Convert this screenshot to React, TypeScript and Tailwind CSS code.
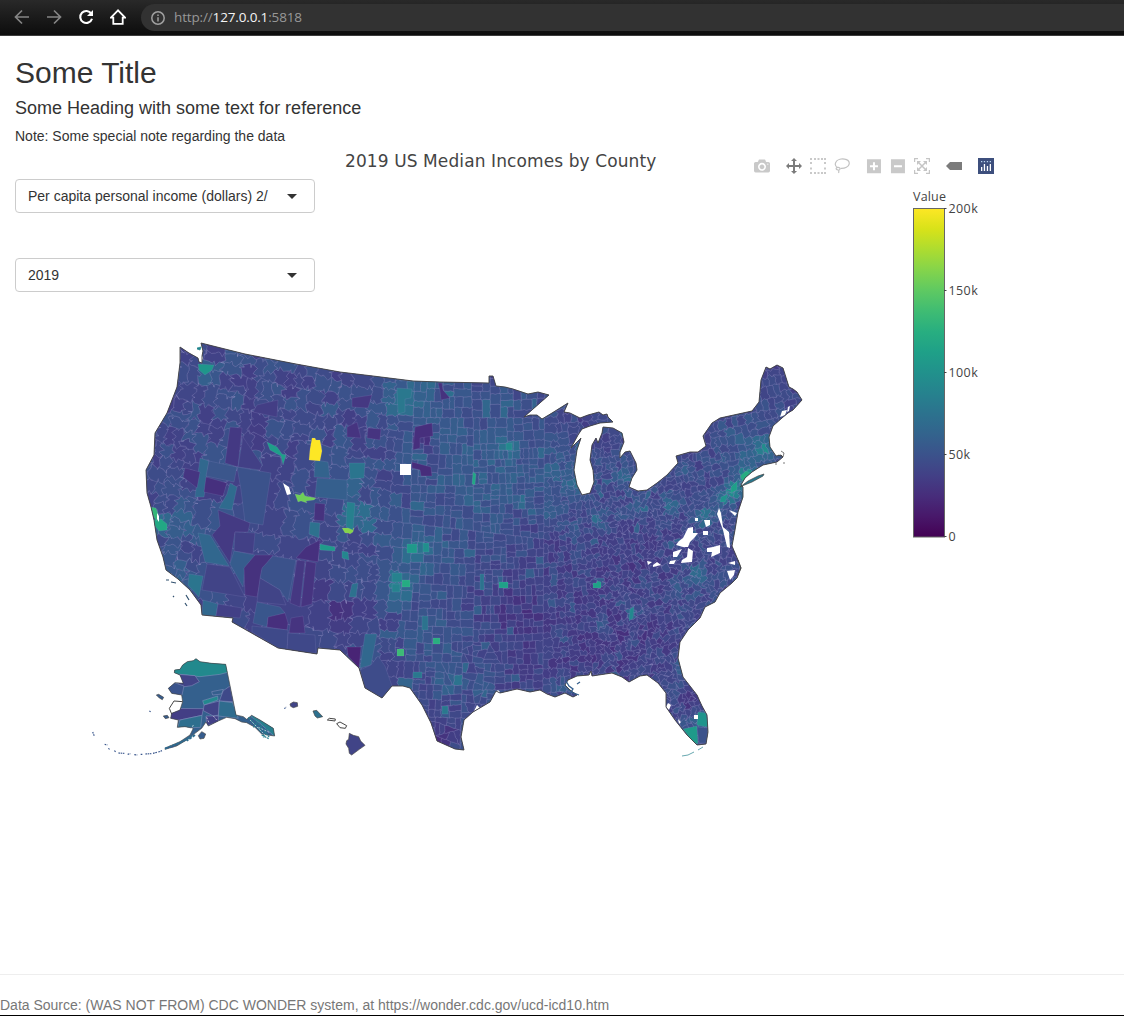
import React from "react";

type Pt = [number, number];

const VIRIDIS = [
  "#440154", "#48186a", "#472d7b", "#424086", "#3b528b", "#33638d", "#2c728e", "#26828e",
  "#21918c", "#1fa088", "#28ae80", "#3fbc73", "#5ec962", "#84d44b", "#addc30", "#d8e219", "#fde725",
];

function ramp(v: number): string {
  const t = Math.max(0, Math.min(0.9999, v)) * 16;
  const i = Math.floor(t);
  const f = t - i;
  const at = (s: string, k: number) => parseInt(s.slice(k, k + 2), 16);
  const mix = [1, 3, 5].map((k) =>
    Math.round(at(VIRIDIS[i], k) * (1 - f) + at(VIRIDIS[i + 1], k) * f)
  );
  return `rgb(${mix.join(",")})`;
}

function makeRandom(seed: number) {
  let s = seed;
  return () => {
    s = (s + 0x6d2b79f5) | 0;
    let t = Math.imul(s ^ (s >>> 15), 1 | s);
    t = (t + Math.imul(t ^ (t >>> 7), 61 | t)) ^ t;
    return ((t ^ (t >>> 14)) >>> 0) / 4294967296;
  };
}

/* Typical county pitch in pixels at a point of the map. */
function pitch(x: number, y: number): number {
  if (x < 200 && y > 455) return 12;
  if (x < 325 && y > 555) return 29;
  if (x < 310 && y > 455) return 23;
  if (x < 200) return 13;
  if (x < 340) return y < 450 ? 14 : 19;
  if (x < 385) return y > 560 ? 15 : 14;
  if (x < 410) return 11.5;
  if (x < 470) return y > 650 ? 8 : 9.6;
  if (x < 560) return y < 440 ? 10 : 7.8;
  if (y < 450) return 8.5;
  return 6.7;
}

/* [x, y, radius, change in value] */
const BUMPS: number[][] = [
  [404, 400, 20, 0.13], [440, 400, 40, 0.05], [475, 480, 50, 0.07], [509, 447, 9, 0.14],
  [410, 550, 15, 0.13], [425, 555, 30, 0.05], [398, 588, 15, 0.16], [440, 640, 30, 0.04],
  [350, 510, 16, 0.1], [370, 525, 10, 0.13], [345, 470, 26, 0.06], [205, 372, 9, 0.12],
  [190, 520, 18, 0.08], [160, 520, 12, 0.13], [175, 575, 14, 0.09], [200, 590, 12, 0.08],
  [735, 490, 10, 0.25], [748, 475, 8, 0.3], [724, 498, 8, 0.14], [706, 516, 9, 0.2],
  [765, 448, 10, 0.18], [750, 450, 25, 0.06], [576, 484, 9, 0.14], [625, 476, 8, 0.14],
  [598, 519, 7, 0.14], [670, 503, 8, 0.14], [635, 510, 8, 0.1], [632, 612, 7, 0.14],
  [697, 574, 8, 0.14], [602, 624, 7, 0.12], [484, 688, 10, 0.1], [457, 680, 9, 0.12],
  [444, 685, 7, 0.1], [563, 686, 8, 0.1], [682, 670, 9, 0.1], [702, 720, 10, 0.1],
  [615, 675, 5, 0.1], [550, 475, 35, 0.04], [560, 640, 70, -0.035],
  [640, 640, 60, -0.035], [640, 555, 35, -0.035], [520, 610, 35, -0.035], [690, 700, 9, -0.1],
  [440, 735, 18, -0.07], [270, 630, 40, -0.04], [330, 600, 30, -0.05], [300, 430, 40, -0.015],
  [775, 385, 25, -0.03], [530, 400, 25, 0.03], [590, 420, 20, -0.02], [425, 440, 8, -0.12],
  [550, 550, 30, -0.02], [540, 560, 9, 0.05], [405, 520, 20, 0.03], [690, 595, 25, 0.02],
  [550, 510, 10, 0.06], [575, 532, 8, 0.06], [556, 473, 8, 0.05], [645, 585, 8, 0.06],
  [675, 585, 7, 0.08], [550, 600, 6, 0.08], [560, 640, 6, 0.07], [445, 595, 9, 0.05],
];

function field(x: number, y: number): number {
  let v = 0.225;
  for (const [bx, by, r, d] of BUMPS) {
    const q = ((x - bx) ** 2 + (y - by) ** 2) / (r * r);
    if (q < 6) v += d * Math.exp(-q);
  }
  return v;
}

function area(p: Pt[]): number {
  let a = 0;
  p.forEach(([x, y], i) => {
    const [u, w] = p[(i + 1) % p.length];
    a += x * w - u * y;
  });
  return Math.abs(a / 2);
}

function cut(p: Pt[], c: Pt, n: Pt): Pt[] {
  const out: Pt[] = [];
  const side = (q: Pt) => (q[0] - c[0]) * n[0] + (q[1] - c[1]) * n[1];
  p.forEach((a, i) => {
    const b = p[(i + 1) % p.length];
    const sa = side(a);
    const sb = side(b);
    if (sa >= 0) out.push(a);
    if (sa >= 0 !== sb >= 0) {
      const t = sa / (sa - sb);
      out.push([a[0] + (b[0] - a[0]) * t, a[1] + (b[1] - a[1]) * t]);
    }
  });
  return out;
}

/* Bends borders irregularly; nearly straight on the Great Plains. */
function warp([x, y]: Pt): Pt {
  const amp = x < 380 ? 1.7 : x < 400 ? 1 : x > 600 && y > 480 ? 1.35 : x > 545 ? 0.9 : 0.3;
  return [
    x + amp * (Math.sin(y * 0.83 + x * 0.31) + 0.8 * Math.sin(y * 1.37 - x * 0.57 + 2)),
    y + amp * (Math.sin(x * 0.79 - y * 0.37 + 1) + 0.8 * Math.sin(x * 1.29 + y * 0.63)),
  ];
}

function trace(p: Pt[]): string {
  const pts: string[] = [];
  p.forEach((a, i) => {
    const b = p[(i + 1) % p.length];
    const n = Math.max(1, Math.round(Math.hypot(b[0] - a[0], b[1] - a[1]) / 2.5));
    for (let k = 0; k < n; k++) {
      const q = warp([a[0] + ((b[0] - a[0]) * k) / n, a[1] + ((b[1] - a[1]) * k) / n]);
      pts.push(q[0].toFixed(1) + " " + q[1].toFixed(1));
    }
  });
  return "M" + pts.join("L") + "Z";
}

/* Splits the country into county-sized cells along the local compass directions. */
function buildCounties() {
  const rnd = makeRandom(2019);
  const cells: { d: string; fill: string }[] = [];
  const walk = (p: Pt[], depth: number) => {
    const a = area(p);
    if (p.length < 3 || a < 2) return;
    const cx = p.reduce((s, q) => s + q[0], 0) / p.length;
    const cy = p.reduce((s, q) => s + q[1], 0) / p.length;
    const size = pitch(cx, cy);
    if (depth > 22 || a < size * size * (1.1 + rnd() * 0.5)) {
      let v = field(cx, cy) + (rnd() - 0.5) * 0.085;
      if (rnd() > 0.965) v += 0.06;
      cells.push({ d: trace(p), fill: ramp(v) });
      return;
    }
    const tilt = (((480 - cx) / 280) * 13 * Math.PI) / 180;
    const ux: Pt = [Math.cos(tilt), Math.sin(tilt)];
    const uy: Pt = [-Math.sin(tilt), Math.cos(tilt)];
    const span = (u: Pt) => {
      const s = p.map((q) => q[0] * u[0] + q[1] * u[1]);
      return Math.max(...s) - Math.min(...s);
    };
    const wx = span(ux);
    const wy = span(uy);
    const along = wx * (0.8 + rnd() * 0.4) > wy ? ux : uy;
    const width = along === ux ? wx : wy;
    const texas = cx > 445 && cx < 490 && cy > 645;
    const loose = texas ? 0.5 : cx > 590 && cy > 490 ? 0.32 : cx < 400 || cx > 550 ? 0.14 : 0.04;
    const ang = depth < 8 ? 0 : (rnd() - 0.5) * 2 * loose;
    const n: Pt = [
      along[0] * Math.cos(ang) - along[1] * Math.sin(ang),
      along[0] * Math.sin(ang) + along[1] * Math.cos(ang),
    ];
    const off = (rnd() - 0.5) * 0.26 * width;
    const c: Pt = [cx + along[0] * off, cy + along[1] * off];
    walk(cut(p, c, n), depth + 1);
    walk(cut(p, c, [-n[0], -n[1]]), depth + 1);
  };
  walk([[130, 330], [815, 330], [815, 765], [130, 765]], 0);
  return cells;
}

const COUNTIES = buildCounties();

const MAINLAND =
  "M180 347L189 353L198 358L199 362L202 363L202 356L203 351L201 343L245 354L296 364L340 372L373 376L413 381L440 382L489 383L489 376L493 376L496 386L505 387L513 389L528 394L538 392L549 395L524 417L530 415L537 415L542 419L552 413L568 403L564 412L570 413L580 418L588 415L599 412L603 415L607 414L608 417L613 422L600 423L590 426L582 429L578 435L571 448L575 444L581 438L577 450L574 470L577 485L582 495L590 493L594 482L593 470L590 460L592 445L596 438L598 443L602 433L603 427L613 428L622 433L624 442L620 452L620 458L625 452L630 451L636 463L637 470L632 478L629 487L638 491L647 490L657 483L667 475L678 463L676 456L690 452L698 452L706 446L703 436L712 423L720 418L752 411L759 402L761 380L766 367L770 369L777 365L783 368L789 387L793 389L797 392L802 400L793 410L788 413L782 418L773 426L769 437L770 447L776 456L781 455L783 457L777 462L763 465L752 472L745 478L741 485L743 487L743 497L738 512L735 530L732 546L738 560L741 568L737 578L732 583L720 593L715 602L705 607L700 618L688 630L680 642L678 658L683 677L690 686L697 695L702 706L707 715L708 732L706 744L697 745L687 735L675 720L666 707L666 693L658 683L647 675L640 676L629 682L622 677L612 673L592 676L591 671L589 675L577 676L568 680L565 685L570 690L577 695L573 697L565 693L555 697L547 694L540 690L530 692L517 689L500 693L496 691L490 702L473 712L464 720L461 737L464 750L455 749L437 741L431 723L422 705L410 688L403 686L392 686L382 698L365 688L359 668L340 650L318 648L317 654L278 648L232 622L233 618L202 615L201 605L190 590L178 579L166 570L163 557L157 540L154 520L151 507L147 493L146 470L154 455L155 433L167 413L177 387L180 363Z";

/* Individually valued counties: fill and outline. */
const NAMED: [string, string][] = [
  ["#1f968b", "M198 364L214 365L212 370L205 375L199 370Z"],
  ["#433e85", "M257 405L278 400L277 417L253 412Z"],
  ["#443983", "M230 427L242 428L238 467L225 463Z"],
  ["#424086", "M243 437L262 465L260 470L238 467Z"],
  ["#31688e", "M200 458L209 461L204 497L195 497Z"],
  ["#3b568c", "M209 461L237 467L234 482L206 476Z"],
  ["#3b528b", "M237 467L271 473L263 525L245 522L241 490Z"],
  ["#46307e", "M206 477L227 483L223 496L204 492Z"],
  ["#453581", "M185 468L200 472L197 488L183 477Z"],
  ["#2f6b8e", "M230 483L237 487L232 510L219 508L227 494Z"],
  ["#355f8d", "M317 478L347 480L347 500L315 497Z"],
  ["#33638d", "M315 460L328 462L330 478L314 477Z"],
  ["#443a83", "M218 510L250 523L248 532L235 532L230 563L212 535L220 526Z"],
  ["#31678e", "M198 533L210 535L229 566L205 562Z"],
  ["#424086", "M235 532L255 533L253 554L234 551Z"],
  ["#414487", "M207 564L230 567L245 597L202 590Z"],
  ["#365c8d", "M234 551L255 555L253 567L245 568L243 587L230 564Z"],
  ["#46327e", "M255 555L273 555L262 570L257 597L245 595L244 568Z"],
  ["#3b528b", "M273 556L296 560L288 602L280 590L260 578L262 568Z"],
  ["#414487", "M260 578L280 590L286 605L257 602Z"],
  ["#453882", "M297 560L305 561L300 607L290 603Z"],
  ["#463480", "M306 561L316 563L312 604L301 607Z"],
  ["#46307e", "M320 540L318 562L296 558L306 547Z"],
  ["#46327e", "M315 503L325 504L324 521L314 520Z"],
  ["#2d718e", "M310 522L320 523L319 538L309 534Z"],
  ["#39568c", "M257 602L280 607L285 613L268 618L267 627L253 623Z"],
  ["#472f7d", "M268 617L285 613L288 623L287 630L267 627Z"],
  ["#463480", "M291 618L303 616L305 633L289 633Z"],
  ["#3e4989", "M252 626L288 630L287 652L278 648L252 632Z"],
  ["#3f4889", "M288 633L315 635L316 653L287 652Z"],
  ["#31688e", "M203 600L218 604L216 616L202 615Z"],
  ["#424086", "M218 604L242 608L240 618L216 616Z"],
  ["#2b758e", "M189 574L203 576L199 597L188 585Z"],
  ["#1f9e89", "M267 442L277 447L282 454L286 455L283 465L281 456L270 450Z"],
  ["#fde725", "M312 438L315 438L316 440L320 440L322 451L320 461L309 460L310 449Z"],
  ["#6ece58", "M295 494L300 495L303 492L305 496L316 498L314 500L306 501L307 503L301 501L298 502Z"],
  ["#84d44b", "M342 528L354 528L353 532L350 534L348 533L345 533Z"],
  ["#1f9a8a", "M320 544L335 547L335 551L320 550Z"],
  ["#27808e", "M347 502L355 503L353 530L346 527Z"],
  ["#24868e", "M342 551L348 552L349 560L342 558Z"],
  ["#2d718e", "M352 584L358 583L356 597L349 597Z"],
  ["#22a884", "M154 520L161 519L167 524L167 530L159 531L155 526Z"],
  ["#35b779", "M151 507L156 508L158 514L157 521L154 517Z"],
  ["#482475", "M347 647L361 647L359 668L348 656Z"],
  ["#31688e", "M365 634L377 634L371 665L360 668Z"],
  ["#3e4c8a", "M371 665L378 656L385 666L392 686L382 698L365 688L360 670Z"],
  ["#3cbb75", "M397 649h7v7h-7z"],
  ["#29af7f", "M433 638h7v6h-7z"],
  ["#1fa188", "M499 582h9v6h-9z"],
  ["#25ac82", "M402 580h8v7h-8z"],
  ["#1f998a", "M407 544h10v9h-10z"],
  ["#218f8d", "M423 543h6v9h-6z"],
  ["#26828e", "M392 573h10v9h-10zM392 584h8v8h-8z"],
  ["#2c738e", "M422 616h6v14h-6z"],
  ["#2a788e", "M442 706h6v8h-6zM413 672h9v6h-9z"],
  ["#472f7d", "M415 427L432 423L433 436L420 438L420 448L413 450Z"],
  ["#472d7b", "M412 462L431 467L432 476L421 476L420 470L412 468Z"],
  ["#453882", "M352 398L372 395L368 408L352 407Z"],
  ["#463480", "M347 427L357 422L361 438L347 437Z"],
  ["#463480", "M368 428L381 429L380 440L367 438Z"],
  ["#46327e", "M438 383h4l1 7 7 8-9 2-1-9z"],
  ["#2b758e", "M349 463L365 463L364 478L350 479Z"],
  ["#2a788e", "M397 388L412 389L411 398L405 399L405 412L398 414Z"],
  ["#22a785", "M473 472L476 474L475 485L472 484Z"],
  ["#238a8d", "M506 443h6v7h-6z"],
  ["#1fa287", "M593 583l4 0 0-2 4 1 0 6-8 0z"],
  ["#23888e", "M630 609L634 607L633 618L629 621Z"],
  ["#27ad81", "M740 476L746 471L750 473L743 481Z"],
  ["#1fa088", "M731 487L737 481L737 490L731 493Z"],
  ["#20938c", "M721 497L728 494L725 502L720 502Z"],
  ["#1f948c", "M698 712L706 713L708 727L697 725Z"],
  ["#1f9a8a", "M683 729L697 726L698 744L693 742Z"],
  ["#3b528b", "M697 727L708 728L706 743L699 743Z"],
  ["#2c738e", "M480 574h4v16h-4z"],
];

const GAPS =
  "M283 483L289 487L291 494L287 495ZM400 464h11v11h-11zM694 715h4v4h-4zM688 528L693 527L693 533L698 533L695 537L690 542L688 547L683 547L676 545L679 541L683 538ZM704 520h6v5l-4 2zM703 531h5v4h-5zM695 518h3v3h-3zM673 552L682 549L677 557L673 557ZM688 548L693 551L692 562L681 563L682 560L687 557ZM670 561L676 560L674 564L669 564ZM653 565L657 562L661 565L653 567ZM647 561L652 562L648 565ZM707 548L713 547L720 545L720 553L711 557L712 552L707 552ZM729 510L737 513L735 516ZM719 508L717 514L723 530L727 547L730 548L729 532L723 527L721 513ZM728 563L735 561L735 565ZM727 571L735 570L734 575L730 580ZM782 411l5-1-2 5-5 2zM157 513l2 3 0 6-2-3zM668 703l3 2-2 5-3-3zM678 719l3 3-2 2zM592 671l-1 5-2 0zM498 690l2 2-3 4-2-3zM477 705l3 3-6 3zM200 350l3 8-2 5-1-6zM788 407l2-1-1 5-2 1z";

const ALASKA =
  "M283 98L284 90L300 88L308 75L322 65L340 62L348 56L360 65L395 70L437 73L468 225L490 230L500 238L515 226L540 240L580 265L584 288L562 285L545 282L525 262L500 248L485 246L465 236L440 232L415 243L385 258L378 246L365 265L345 280L320 300L290 318L255 328L256 324L300 305L330 285L340 265L315 260L292 262L295 240L272 235L275 220L300 210L308 185L305 165L275 160L265 145L285 128L310 130L300 105Z";

function UsMap() {
  return (
    <>
      <defs>
        <clipPath id="mainland"><path d={MAINLAND} /></clipPath>
        <clipPath id="alaska"><path d={ALASKA} /></clipPath>
        <linearGradient id="viridis" x1="0" y1="1" x2="0" y2="0">
          {VIRIDIS.map((c, i) => <stop key={c} offset={i / 16} stopColor={c} />)}
        </linearGradient>
      </defs>
      <path d={MAINLAND} fill="#414487" />
      <g clipPath="url(#mainland)">
        <g stroke="#a9a4d6" strokeOpacity="0.42" strokeWidth="0.5">
          {COUNTIES.map((c, i) => <path key={i} d={c.d} fill={c.fill} />)}
        </g>
        <g stroke="#a9a4d6" strokeOpacity="0.3" strokeWidth="0.5">
          {NAMED.map(([fill, d]) => <path key={d} d={d} fill={fill} />)}
        </g>
        <path d={GAPS} fill="#fff" />
      </g>
      <path d={MAINLAND} fill="none" stroke="#444" strokeWidth="0.9" />
      {/* Long Island, Cape Cod, barrier islands and keys */}
      <g stroke="#444" strokeWidth="0.7">
        <path d="M740 487L748 481L758 476L764 474L763 476L752 482L742 486Z" fill="#2a788e" />
        <path d="M778 455L783 457L784 453L781 451" fill="none" />
        <path d="M775 464l2 0M783 463l2 0M738 560l3 8-4 8" fill="none" />
        <path d="M682 756L688 755L694 752M698 750l5-3" fill="none" stroke="#26828e" />
        <path d="M577 684l3-2M566 681l3 5 4 3-2 3 8 3" fill="none" stroke="#355f8d" strokeWidth="1.3" />
        <path d="M166 580l3 0M171 582l5 1M173 596l1 1M186 595l3 5M185 603l2 3" fill="none" stroke="#31506e" strokeWidth="1.2" />
        <path d="M197 348l4-1-1 3-3-1" fill="#24868e" stroke="#24868e" />
      </g>
      <g transform="translate(80 640) scale(0.33333)">
        <path d={ALASKA} fill="#34608d" />
        <g clipPath="url(#alaska)">
          <g stroke="#8f95c5" strokeWidth="1.5">
            <path d="M270 50H450V95L420 103L360 110L300 103L270 105Z" fill="#22898d" />
            <path d="M295 103L345 107L358 125L335 137L300 142L290 120Z" fill="#414487" />
            <path d="M260 120L312 138L306 165L255 165Z" fill="#3a548c" />
            <path d="M265 205L370 206L366 226L300 240L265 240Z" fill="#433e85" />
            <path d="M372 195L418 183L417 225L400 228L370 212Z" fill="#414487" />
            <path d="M368 182L413 168L414 180L372 195Z" fill="#23888e" />
            <path d="M395 155L430 148L425 162L398 165Z" fill="#355f8d" />
            <path d="M430 152L450 138L460 185L418 183Z" fill="#3e4989" />
            <path d="M418 183L458 188L475 235L415 228Z" fill="#2f6c8e" />
            <path d="M300 240L366 226L362 262L292 265Z" fill="#2e6f8e" />
            <path d="M378 228L415 228L415 245L380 258Z" fill="#424086" />
            <path d="M500 220L590 262L590 295L540 250Z" fill="#277f8e" />
          </g>
        </g>
        <path d={ALASKA} fill="none" stroke="#444" strokeWidth="2" />
        <path d="M308 185L282 183L268 205L275 222" fill="none" stroke="#444" strokeWidth="3" />
        <g fill="#365c8d" stroke="#444" strokeWidth="2">
          <path d="M229 165L236 163L251 172L247 179L238 174Z" />
          <path d="M250 228L262 226L267 233L256 236Z" />
          <path d="M355 287L365 275L377 282L372 295L360 297Z" />
          <path d="M630 192L640 186L652 188L653 199L640 203L632 199Z" fill="#414487" />
          <path d="M699 213L710 211L728 230L712 234L705 228Z" fill="#2d708e" />
          <path d="M808 280L820 286L836 290L842 303L855 316L838 328L815 345L808 340L806 325L798 312L800 302L806 298Z" fill="#414487" />
          <path d="M742 240L748 235L766 237L765 243Z" fill="#fff" strokeWidth="3" />
          <path d="M770 251L780 246L800 257L796 265L780 263Z" fill="#fff" strokeWidth="3" />
        </g>
        <g fill="none" stroke="#39568c" strokeWidth="3.5">
          <path d="M613 206l6-5M208 213l4 2M38 276l5 12M74 313l8 2M85 325l5 4M103 332l5 4M115 339l18 1M143 343l8 -2M163 344l9 1M182 343l5 0M196 342l18-1M219 340l12-3M235 336l11-4M256 325l24-5" strokeDasharray="5 2" />
          <path d="M505 232L550 280M518 230L568 292M530 250L520 262M545 255L538 272M560 265L550 292M545 285L566 296" stroke="#277f8e" strokeDasharray="7 2" />
          <path d="M255 326L300 308L335 288M345 285L320 302" stroke="#2f6c8e" strokeWidth="6" strokeDasharray="9 3" />
        </g>
        <path d="M510 240L555 285M380 232L388 250M535 262L570 278M340 255L330 275M400 228L410 240" fill="none" stroke="#fff" strokeWidth="1.8" strokeDasharray="6 4" />
      </g>
    </>
  );
}

function ColorBar() {
  const ticks: [string, number][] = [
    ["200k", 208.5], ["150k", 290.5], ["100k", 372.5], ["50k", 454.5], ["0", 536.5],
  ];
  return (
    <g fontFamily='"Open Sans", "Noto Sans", sans-serif' fill="#444">
      <text x="913" y="201" fontSize="12.5" textLength="33">Value</text>
      <rect x="913.5" y="208.5" width="31" height="328.5" fill="url(#viridis)" stroke="#666" />
      {ticks.map(([label, y]) => (
        <g key={label}>
          <path d={`M944 ${y}h2.500`} stroke="#444" />
          <text x="948.5" y={y + 4.5} fontSize="12.5" letterSpacing="0.4">{label}</text>
        </g>
      ))}
    </g>
  );
}

function ModeIcon({ box, d, dark = false }: { box: string; d: string; dark?: boolean }) {
  return (
    <svg viewBox={box} className={dark ? "size-4 fill-[#7b7b7b]" : "size-4 fill-[#c9c9c9]"}>
      <path transform="matrix(1 0 0 -1 0 850)" d={d} />
    </svg>
  );
}

function ModeBar() {
  return (
    <div className="flex h-4 items-center gap-4">
      <ModeIcon box="0 0 1000 1000" d="m500 450c-83 0-150-67-150-150 0-83 67-150 150-150 83 0 150 67 150 150 0 83-67 150-150 150z m400 150h-120c-16 0-34 13-39 29l-31 93c-6 15-23 28-40 28h-340c-16 0-34-13-39-28l-31-94c-6-15-23-28-40-28h-120c-55 0-100-45-100-100v-450c0-55 45-100 100-100h800c55 0 100 45 100 100v450c0 55-45 100-100 100z m-400-550c-138 0-250 112-250 250 0 138 112 250 250 250 138 0 250-112 250-250 0-138-112-250-250-250z m365 380c-19 0-35 16-35 35 0 19 16 35 35 35 19 0 35-16 35-35 0-19-16-35-35-35z" />
      <div className="flex gap-2">
        <ModeIcon dark box="0 0 1000 1000" d="m1000 350l-187 188 0-125-250 0 0 250 125 0-188 187-187-187 125 0 0-250-250 0 0 125-188-188 186-187 0 125 252 0 0-250-125 0 187-188 188 188-125 0 0 250 250 0 0-126 187 188z" />
        <svg viewBox="0 0 16 16" className="size-4 fill-[#c9c9c9]">
          <path d="M0 0h2v2H0zM4 0h2v2H4zM7.500 0h2v2h-2zM11 0h2v2h-2zM14 0h2v2h-2zM0 14h2v2H0zM4 14h2v2H4zM7.500 14h2v2h-2zM11 14h2v2h-2zM14 14h2v2h-2zM0 4h2v2H0zM0 9.500h2v2H0zM14 4h2v2h-2zM14 9.500h2v2h-2z" />
        </svg>
        <svg viewBox="0 0 16 16" fill="none" className="size-4 stroke-[#c3c3c3]">
          <path strokeWidth="1.2" d="M3.500 9.800C1.500 8.500.8 6.500 1.700 4.400 3 1.600 7 .5 10.500 1.100c3 .5 5 2.400 4.700 4.700-.4 2.900-4.200 4.900-8.700 4.600" />
          <path strokeWidth="1.2" d="M2.300 10c.8-1.200 3.300-.7 3.700.4.300 1-.7 1.800-2 1.600C2.600 11.800 1.800 10.900 2.300 10zM4.600 12c.7 1-.2 1.600.2 3" />
        </svg>
      </div>
      <div className="flex gap-2">
        <ModeIcon box="-60 -10 1000 1000" d="m1 787l0-875 875 0 0 875-875 0z m687-500l-187 0 0-187-125 0 0 187-188 0 0 125 188 0 0 187 125 0 0-187 187 0 0-125z" />
        <ModeIcon box="-60 -10 1000 1000" d="m0 788l0-876 875 0 0 876-875 0z m688-500l-500 0 0 125 500 0 0-125z" />
        <svg viewBox="0 0 16 16" fill="none" className="size-4 stroke-[#c5c5c5]">
          <path strokeWidth="1.200" d="M.6 4V.6H4M12 .6h3.400V4M15.400 12v3.400H12M4 15.400H.6V12" />
          <path strokeWidth="1.500" d="M4 4l8 8M12 4l-8 8" />
          <path className="fill-[#c5c5c5]" stroke="none" d="M3 3h4L3 7zM13 3v4L9 3zM13 13H9l4-4zM3 13V9l4 4z" />
        </svg>
      </div>
      <svg viewBox="0 0 16 16" className="size-4 fill-[#7b7b7b]">
        <path d="M0 8l4-4h12v8H4z" />
      </svg>
      <svg viewBox="0 0 16 16" className="size-4">
        <path fill="#3d4f7d" d="M0 0h16v16H0z" />
        <path fill="#b9d4ee" d="M3 3h1.300v1.300H3zM5.800 3h1.300v1.300H5.800zM8.800 3h1.300v1.300H8.800zM11.700 3H13v1.300h-1.300z" />
        <path fill="#fff" d="M3 9h1.300v4H3zM5.800 6h1.300v7H5.800zM8.800 8h1.300v5H8.800zM11.700 6H13v7h-1.300z" />
      </svg>
    </div>
  );
}

function SelectBox({ label }: { label: string }) {
  return (
    <div className="flex h-[34px] w-[300px] items-center justify-between rounded border border-[#ccc] bg-white pr-[17px] pl-3 text-sm text-[#333]">
      <span>{label}</span>
      <span className="border-x-[5px] border-t-[5px] border-x-transparent border-t-[#333]" />
    </div>
  );
}

function BrowserBar() {
  return (
    <header className="flex h-9 border-b border-[#3c3c3c] bg-linear-to-b from-[#292929] to-[#0d0d0d]">
      <div className="flex w-[141px] items-center gap-4 pb-0.5 pl-[14px]">
        <svg viewBox="0 0 16 16" fill="none" stroke="#858585" strokeWidth="1.700" className="size-4"><path d="M15 8H2M8 1.500L1.500 8 8 14.500" /></svg>
        <svg viewBox="0 0 16 16" fill="none" stroke="#858585" strokeWidth="1.700" className="size-4"><path d="M1 8h13M8 1.500L14.500 8 8 14.500" /></svg>
        <svg viewBox="0 0 16 16" fill="none" stroke="#fff" strokeWidth="2.100" className="size-4"><path d="M13.300 4.700A6 6 0 1 0 14 9.800" /><path d="M15 1v6H9z" fill="#fff" stroke="none" /></svg>
        <svg viewBox="0 0 16 16" fill="none" stroke="#fff" strokeWidth="1.800" className="size-4"><path d="M8 1.300L.9 8.700h2.400v6.200h9.400V8.700h2.400z" /></svg>
      </div>
      <div className="mt-1 flex h-[27px] flex-1 items-center rounded-l-full bg-[#323232] pl-2.5">
        <svg viewBox="0 0 14 14" fill="none" stroke="#a0a0a0" strokeWidth="1.500" className="size-3.5"><circle cx="7" cy="7" r="6.200" /><path d="M7 6.200v4.200M7 3.500v1.500" /></svg>
        <span className="ml-[9px] font-['Open_Sans','Noto_Sans',sans-serif] text-[13.5px] tracking-[-0.15px] text-[#989898]">
          http://<span className="text-[#f4f4f4]">127.0.0.1</span>:5818
        </span>
      </div>
    </header>
  );
}

export default function App() {
  return (
    <div className="flex h-[1016px] w-[1124px] flex-col overflow-hidden border-b border-black bg-white font-['Liberation_Sans',Arial,sans-serif] text-[#333]">
      <BrowserBar />
      <div className="flex flex-col px-[15px] pt-5">
        <h2 className="text-[30px] leading-[33px]">Some Title</h2>
        <h4 className="mt-[9px] text-lg leading-5">Some Heading with some text for reference</h4>
        <p className="mt-2 text-sm leading-5">Note: Some special note regarding the data</p>
      </div>
      <main className="grid h-[828px] grid-cols-[1124px] grid-rows-[828px]">
        <svg viewBox="0 146 1124 828" className="col-start-1 row-start-1 h-[828px] w-[1124px]">
          <UsMap />
          <ColorBar />
        </svg>
        <div className="col-start-1 row-start-1 flex items-start">
          <div className="mt-[33px] ml-[15px] flex w-[330px] flex-col gap-[45px]">
            <SelectBox label="Per capita personal income (dollars) 2/" />
            <SelectBox label="2019" />
          </div>
          <div className="flex w-[649px] items-start justify-between">
            <h3 className="mt-1 font-['DejaVu_Sans',Verdana,sans-serif] text-[17px] leading-[22px] tracking-[0.1px] whitespace-nowrap text-[#444]">2019 US Median Incomes by County</h3>
            <div className="mt-3"><ModeBar /></div>
          </div>
        </div>
      </main>
      <footer className="border-t border-[#eee] pt-5 text-sm leading-5 text-[#777]">
        Data Source: (WAS NOT FROM) CDC WONDER system, at https://wonder.cdc.gov/ucd-icd10.htm
      </footer>
    </div>
  );
}
